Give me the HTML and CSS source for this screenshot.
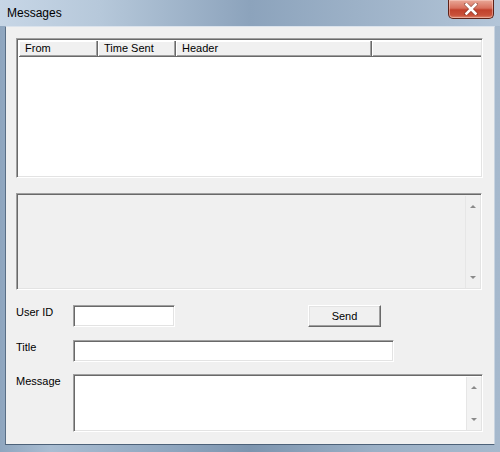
FILE: index.html
```html
<!DOCTYPE html>
<html>
<head>
<meta charset="utf-8">
<title>Messages</title>
<link rel="stylesheet" href="styles.css">
</head>
<body>
<div class="window">
  <div class="titlebar">
    <span class="title">Messages</span>
    <div class="close">
      <svg width="14" height="12" viewBox="0 0 14 12"><path d="M2 1 L12 11 M12 1 L2 11" stroke="#3a1a14" stroke-width="4" stroke-linecap="round" opacity="0.35"/><path d="M2.5 1.5 L11.5 10.5 M11.5 1.5 L2.5 10.5" stroke="#ffffff" stroke-width="2.6" stroke-linecap="square"/></svg>
    </div>
  </div>
  <div class="client">
    <div class="listview sunken">
      <div class="lv-header">
        <div class="col c1">From</div>
        <div class="col c2">Time Sent</div>
        <div class="col c3">Header</div>
        <div class="col c4"></div>
      </div>
      <div class="lv-body"></div>
    </div>
    <div class="readbox sunken">
      <div class="readbox-area"></div>
      <div class="vscroll">
        <span class="arrow up"></span>
        <span class="arrow down"></span>
      </div>
    </div>
    <div class="row row1">
      <label class="lbl">User ID</label>
      <div class="edit sunken userid"></div>
      <button class="btn">Send</button>
    </div>
    <div class="row row2">
      <label class="lbl">Title</label>
      <div class="edit sunken titlebox"></div>
    </div>
    <div class="row row3">
      <label class="lbl">Message</label>
      <div class="edit sunken message">
        <div class="message-area"></div>
        <div class="vscroll white">
          <span class="arrow up"></span>
          <span class="arrow down"></span>
        </div>
      </div>
    </div>
  </div>
</div>
</body>
</html>
```
FILE: styles.css
```css
* { box-sizing: border-box; }
html, body { margin: 0; padding: 0; }
body {
  width: 500px;
  height: 452px;
  overflow: hidden;
  font-family: "Liberation Sans", Arial, sans-serif;
  font-size: 11px;
  color: #000;
}
.window {
  width: 500px;
  height: 452px;
  background: linear-gradient(90deg, #8fa6bf 0%, #a9bdd2 10%, #8ea5be 35%, #7d95af 50%, #9bb0c6 75%, #a6b9cd 100%);
  display: flex;
  flex-direction: column;
}
.titlebar {
  height: 26px;
  position: relative;
  background: linear-gradient(90deg, #c7d6e6 0%, #b6c8da 20%, #8ca3bc 50%, #a3b7cc 80%, #b3c5d8 100%);
}
.title {
  position: absolute;
  left: 7px;
  top: 6px;
  font-size: 12px;
  color: #000;
}
.close {
  position: absolute;
  left: 448px;
  top: 0;
  width: 46px;
  height: 19px;
  border: 1px solid #5e2218;
  border-top: none;
  border-radius: 0 0 5px 5px;
  background: linear-gradient(180deg, #e9a898 0%, #d8705d 45%, #c1412c 55%, #c9513a 85%, #dd8a70 100%);
  box-shadow: inset 0 0 0 1px rgba(255,220,210,0.45);
  display: flex;
  align-items: center;
  justify-content: center;
}
.close svg { display: block; margin-top: -1px; }
.client {
  margin: 0 5px;
  height: 419px;
  background: #f0f0f0;
  border: 1px solid #dbe3ec;
  border-left-color: #5a6f86;
  border-bottom-color: #4d6279;
  border-right-color: #c9d4e0;
  padding: 11px 11px 0 10px;
}
.sunken {
  border-top: 1px solid #a0a0a0;
  border-left: 1px solid #a0a0a0;
  border-right: 1px solid #ffffff;
  border-bottom: 1px solid #ffffff;
  box-shadow: inset 1px 1px 0 #696969, inset -1px -1px 0 #e3e3e3;
}
.listview {
  width: 467px;
  height: 140px;
  background: #fff;
  padding: 2px 1px 1px 2px;
  display: flex;
  flex-direction: column;
}
.lv-header {
  height: 16px;
  display: flex;
  background: #f0f0f0;
  border-bottom: 1px solid #696969;
  box-shadow: 0 -1px 0 #a0a0a0 inset;
}
.col {
  height: 15px;
  line-height: 14px;
  padding-left: 6px;
  border-right: 1px solid #696969;
  box-shadow: inset -1px 0 0 #a0a0a0, inset 1px 1px 0 #ffffff;
  white-space: nowrap;
}
.c1 { width: 79px; }
.c2 { width: 78px; }
.c3 { width: 196px; }
.c4 { flex: 1; border-right: none; box-shadow: inset 1px 1px 0 #ffffff; }
.lv-body { flex: 1; }
.readbox {
  margin-top: 15px;
  width: 466px;
  height: 97px;
  background: #f0f0f0;
  padding: 2px 1px 1px 2px;
  display: flex;
}
.readbox-area { flex: 1; }
.vscroll {
  width: 15px;
  position: relative;
  background: #f0f0f0;
  border-left: 1px solid #e6e6e6;
}
.vscroll.white { background: #f3f3f3; }
.arrow {
  position: absolute;
  left: 4px;
  width: 0;
  height: 0;
  border-left: 3px solid transparent;
  border-right: 3px solid transparent;
}
.arrow.up {
  top: 9px;
  border-bottom: 3px solid #8a8a8a;
}
.arrow.down {
  bottom: 9px;
  border-top: 3px solid #8a8a8a;
}
.row {
  display: flex;
  align-items: flex-start;
}
.row1 { margin-top: 15px; }
.row2 { margin-top: 13px; }
.row3 { margin-top: 12px; }
.lbl {
  width: 57px;
  padding-top: 1px;
  line-height: 13px;
}
.edit {
  height: 22px;
  background: #fff;
}
.userid { width: 102px; }
.titlebox { width: 321px; }
.message {
  width: 410px;
  height: 58px;
  padding: 2px 1px 1px 2px;
  display: flex;
}
.message-area { flex: 1; }
.btn {
  margin-left: 133px;
  width: 73px;
  height: 22px;
  padding: 0;
  font-family: "Liberation Sans", Arial, sans-serif;
  font-size: 11px;
  color: #000;
  background: #f0f0f0;
  border-top: 1px solid #ffffff;
  border-left: 1px solid #ffffff;
  border-right: 1px solid #696969;
  border-bottom: 1px solid #696969;
  box-shadow: inset -1px -1px 0 #a0a0a0, inset 1px 1px 0 #e3e3e3;
}
```
